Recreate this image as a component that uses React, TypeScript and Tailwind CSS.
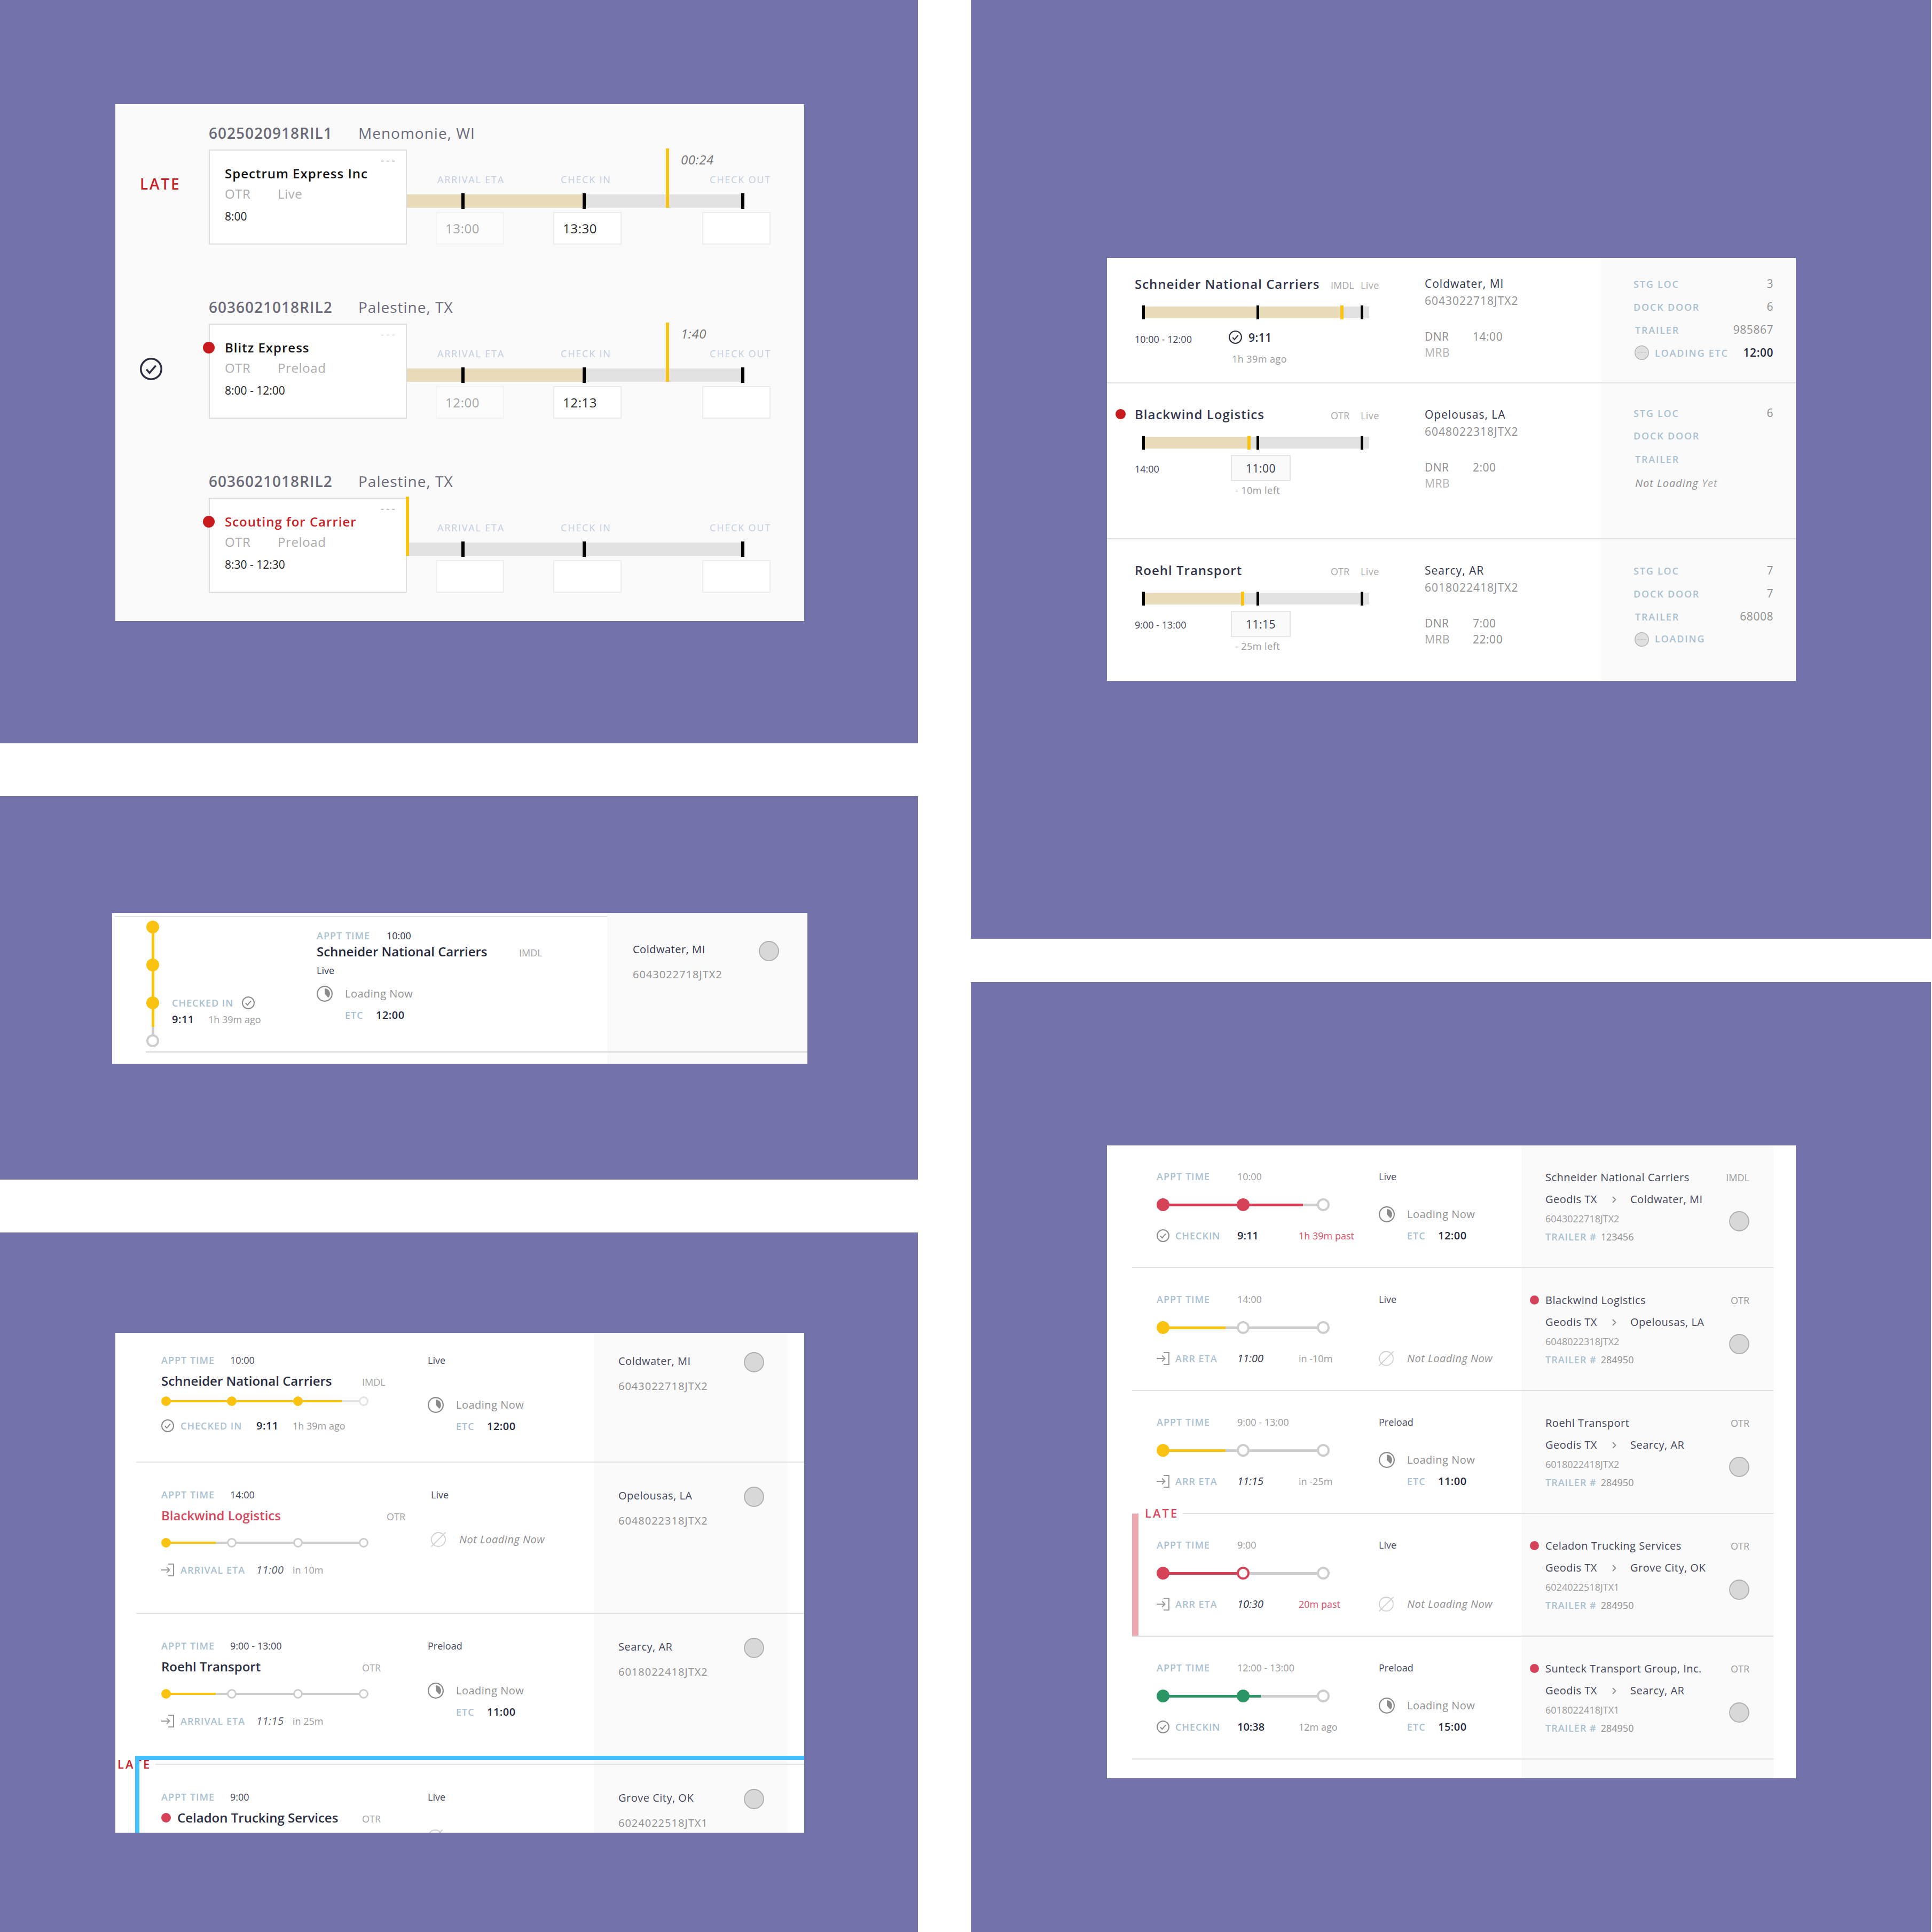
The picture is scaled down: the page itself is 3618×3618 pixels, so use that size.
import type { ReactNode } from "react";

/* ---------- icons ---------- */

function CheckCircle({ className }: { className: string }) {
  return (
    <svg viewBox="0 0 24 24" fill="none" stroke="currentColor" strokeWidth="2" className={className} aria-hidden="true">
      <circle cx="12" cy="12" r="11" />
      <path d="M7 12.4l3.3 3.8L17 8.4" />
    </svg>
  );
}

function ArriveIcon({ className }: { className: string }) {
  return (
    <svg viewBox="0 0 24 24" fill="none" stroke="currentColor" strokeWidth="2" className={className} aria-hidden="true">
      <path d="M13 1h10v22H13" />
      <path d="M0 12h16M10 6.5l5.5 5.5-5.5 5.5" />
    </svg>
  );
}

function LoadingIcon({ className }: { className: string }) {
  return (
    <svg viewBox="0 0 30 30" fill="none" className={className} aria-hidden="true">
      <circle cx="15" cy="15" r="13.9" stroke="currentColor" strokeWidth="2.2" />
      <path d="M15 15V5a10 10 0 0 1 6.8 17.2z" fill="currentColor" />
    </svg>
  );
}

function NotLoadingIcon({ className }: { className: string }) {
  return (
    <svg viewBox="0 0 28 28" fill="none" stroke="currentColor" strokeWidth="1.8" className={className} aria-hidden="true">
      <circle cx="14" cy="14" r="13" />
      <path d="M0.5 27.5l27-27" />
    </svg>
  );
}

function StatusDisc({ className, dashes = false }: { className: string; dashes?: boolean }) {
  return (
    <svg viewBox="0 0 38 38" fill="none" className={className} aria-hidden="true">
      <circle cx="19" cy="19" r="18" fill={dashes ? "#e0e0e0" : "#d8d8d8"} stroke="#aeaeae" strokeWidth="1.8" />
      {dashes && <path d="M8 19h5M16.500 19h5M25 19h5" stroke="#bcbcbc" strokeWidth="1.6" />}
    </svg>
  );
}

function Chevron({ className }: { className: string }) {
  return (
    <svg viewBox="0 0 8 13" fill="none" stroke="currentColor" strokeWidth="1.8" className={className} aria-hidden="true">
      <path d="M1 1l5.500 5.500L1 12" />
    </svg>
  );
}

/* ---------- shared pieces ---------- */

const tones = {
  yellow: { fill: "bg-[#fac312]", ring: "border-[#fac312]" },
  red: { fill: "bg-[#d64358]", ring: "border-[#d64358]" },
  green: { fill: "bg-[#2c9566]", ring: "border-[#2c9566]" },
};
type Tone = keyof typeof tones;
type Stop = "done" | "current" | "open";

function Label({ children, wide = false }: { children: ReactNode; wide?: boolean }) {
  return (
    <span className={`text-[18px] leading-6 font-semibold whitespace-nowrap text-[#a9c1d1] ${wide ? "tracking-widest" : "tracking-[1px]"}`}>
      {children}
    </span>
  );
}

function Progress({
  tone,
  stops,
  progress,
  large = false,
  faint = false,
}: {
  tone: Tone;
  stops: Stop[];
  progress: number;
  large?: boolean;
  faint?: boolean;
}) {
  const rest = faint ? "bg-[#e3e3e3]" : "bg-[#cdcdcd]";
  const openRing = faint ? "border-[#e3e3e3]" : "border-[#cdcdcd]";
  return (
    <div className="relative flex items-center justify-between">
      <div className={`absolute ${large ? "inset-x-[11px] h-[5px]" : "inset-x-[9px] h-[4px]"} ${rest}`}>
        <div className={`h-full ${tones[tone].fill}`} style={{ width: `${progress}%` }} />
      </div>
      {stops.map((stop, i) => (
        <span
          key={i}
          className={`relative rounded-full ${large ? "size-[24px] border-4" : "size-[18px] border-3"} ${
            stop === "done"
              ? `${tones[tone].fill} ${tones[tone].ring}`
              : stop === "current"
                ? `bg-white ${tones[tone].ring}`
                : `bg-white ${openRing}`
          }`}
        />
      ))}
    </div>
  );
}

function LoadingStatus({ loading, etc, className }: { loading: boolean; etc?: string; className: string }) {
  if (!loading) {
    return (
      <div className={`grid grid-cols-[53px_1fr] items-center ${className}`}>
        <NotLoadingIcon className="size-[28px] text-[#cfcfcf]" />
        <span className="text-[20px] leading-7 tracking-wide italic whitespace-nowrap text-[#8f8f8f]">Not Loading Now</span>
      </div>
    );
  }
  return (
    <div className={`grid grid-cols-[53px_58px_1fr] gap-y-3 items-baseline ${className}`}>
      <LoadingIcon className="size-[30px] -my-px self-center text-[#8a8a8a]" />
      <span className="col-span-2 text-[20px] leading-7 tracking-wide whitespace-nowrap text-[#8f8f8f]">Loading Now</span>
      <span className="col-start-2">
        <Label>ETC</Label>
      </span>
      <span className="text-[20px] leading-7 font-semibold tracking-wide text-[#26283d]">{etc}</span>
    </div>
  );
}

function Stage({ className, children }: { className: string; children: ReactNode }) {
  return <section className={`bg-[#7472ab] ${className}`}>{children}</section>;
}

/* ---------- appointment cards with time entry ---------- */

type Dock = {
  id: string;
  city: string;
  status: "late" | "ok" | "none";
  carrier: string;
  mode: string;
  load: string;
  window: string;
  alert?: boolean;
  scouting?: boolean;
  faintMenu?: boolean;
  fill: number;
  marker: number;
  elapsed?: string;
  eta: string;
  checkIn: string;
};

const docks: Dock[] = [
  { id: "6025020918RIL1", city: "Menomonie, WI", status: "late", carrier: "Spectrum Express Inc", mode: "OTR", load: "Live", window: "8:00", fill: 52.5, marker: 77, elapsed: "00:24", eta: "13:00", checkIn: "13:30" },
  { id: "6036021018RIL2", city: "Palestine, TX", status: "ok", carrier: "Blitz Express", mode: "OTR", load: "Preload", window: "8:00 - 12:00", alert: true, faintMenu: true, fill: 52.5, marker: 77, elapsed: "1:40", eta: "12:00", checkIn: "12:13" },
  { id: "6036021018RIL2", city: "Palestine, TX", status: "none", carrier: "Scouting for Carrier", mode: "OTR", load: "Preload", window: "8:30 - 12:30", alert: true, scouting: true, fill: 0, marker: 0, eta: "", checkIn: "" },
];

function TimeEntry({ id, value, muted }: { id: string; value: string; muted?: boolean }) {
  return (
    <input
      id={id}
      type="text"
      defaultValue={value}
      className={`h-[61px] w-[128px] border-2 pl-4 text-[24px] tracking-wide outline-none ${
        muted ? "border-[#f3f3f3] bg-[#fcfcfc] text-[#a5a5a5]" : "border-[#ededed] bg-white text-[#2a2a2a]"
      }`}
    />
  );
}

function DockRow({ dock, index }: { dock: Dock; index: number }) {
  const label = "text-[18px] leading-6 tracking-widest text-[#c3cedf] whitespace-nowrap";
  return (
    <li className="grid grid-cols-[175fr_371fr_744fr]">
      <div className="col-span-2 col-start-2 flex text-[28px] leading-10 tracking-[1px] text-[#6b6b79]">
        <span className="w-[280px] font-semibold">{dock.id}</span>
        <span>{dock.city}</span>
      </div>
      <div className="mt-[11px] pl-[46px]">
        {dock.status === "late" && (
          <p className="mt-[44px] text-[28px] leading-10 font-semibold tracking-widest text-[#cb2026]">LATE</p>
        )}
        {dock.status === "ok" && <CheckCircle className="mt-[64px] size-[42px] text-[#2b2d42]" />}
      </div>
      <article className="relative mt-[11px] border-2 border-[#dedede] bg-white pl-7 pt-[27px]">
        {dock.alert && <span className="absolute top-[32px] -left-[13px] size-[22px] rounded-full bg-[#c8191c]" />}
        <button
          type="button"
          aria-label="More actions"
          className={`absolute top-[4px] right-[16px] text-[20px] leading-7 tracking-[4px] ${dock.faintMenu ? "text-[#dcdcdc]" : "text-[#a0a0a0]"}`}
        >
          ---
        </button>
        <h3 className={`text-[24px] leading-8 font-semibold tracking-[1px] ${dock.scouting ? "text-[#cb2026]" : "text-[#111111]"}`}>{dock.carrier}</h3>
        <p className="mt-[6px] grid grid-cols-[99px_1fr] text-[24px] leading-8 tracking-wide text-[#adadad]">
          <span>{dock.mode}</span>
          <span>{dock.load}</span>
        </p>
        <p className="mt-[12px] text-[21px] leading-7 text-[#222222]">{dock.window}</p>
      </article>
      <div className="mt-[11px] pt-[44px]">
        <div className="grid grid-cols-[54px_220px_279px_1fr]">
          <label htmlFor={`eta-${index}`} className={`col-start-2 pl-[3px] ${label}`}>ARRIVAL ETA</label>
          <label htmlFor={`in-${index}`} className={`pl-[14px] ${label}`}>CHECK IN</label>
          <label htmlFor={`out-${index}`} className={`pl-[14px] ${label}`}>CHECK OUT</label>
        </div>
        <div className="relative mt-4 h-[25px] w-[85%] bg-[#e2e2e2]">
          <div className="h-full bg-[#e7dbba]" style={{ width: `${dock.fill}%` }} />
          {[16.6, 52.5, 99.5].map((at) => (
            <span key={at} className="absolute -top-[2px] -ml-[3px] h-[29px] w-[6px] bg-black" style={{ left: `${at}%` }} />
          ))}
          <div className="absolute bottom-0 -ml-[2px] flex h-[111px]" style={{ left: `${dock.marker}%` }}>
            <span className="w-[6px] bg-[#fac312]" />
            {dock.elapsed && (
              <span className="pt-[5px] pl-[22px] text-[24px] leading-8 tracking-wide text-[#757575] italic">{dock.elapsed}</span>
            )}
          </div>
        </div>
        <div className="mt-2 grid grid-cols-[54px_220px_279px_1fr]">
          <div className="col-start-2">
            <TimeEntry id={`eta-${index}`} value={dock.eta} muted={dock.eta !== ""} />
          </div>
          <TimeEntry id={`in-${index}`} value={dock.checkIn} />
          <TimeEntry id={`out-${index}`} value="" />
        </div>
      </div>
    </li>
  );
}

/* ---------- board with yard details ---------- */

type Board = {
  carrier: string;
  alert?: boolean;
  mode: string;
  window: string;
  marker: number;
  checkedIn?: string;
  eta?: string;
  relative: string;
  city: string;
  id: string;
  dnr: string;
  mrb: string;
  stg: string;
  door: string;
  trailer: string;
  loading: "etc" | "now" | "none";
  etc?: string;
  tight?: boolean;
  height: string;
  yard: string;
};

const boards: Board[] = [
  { carrier: "Schneider National Carriers", mode: "IMDL", window: "10:00 - 12:00", marker: 88, checkedIn: "9:11", relative: "1h 39m ago", city: "Coldwater, MI", id: "6043022718JTX2", dnr: "14:00", mrb: "", stg: "3", door: "6", trailer: "985867", loading: "etc", etc: "12:00", tight: true, height: "min-h-[235px] border-b-2", yard: "gap-[15px] pt-[34px]" },
  { carrier: "Blackwind Logistics", alert: true, mode: "OTR", window: "14:00", marker: 47, eta: "11:00", relative: "- 10m left", city: "Opelousas, LA", id: "6048022318JTX2", dnr: "2:00", mrb: "", stg: "6", door: "", trailer: "", loading: "none", height: "min-h-[292px] border-b-2", yard: "gap-[16px] pt-[41px]" },
  { carrier: "Roehl Transport", mode: "OTR", window: "9:00 - 13:00", marker: 44, eta: "11:15", relative: "- 25m left", city: "Searcy, AR", id: "6018022418JTX2", dnr: "7:00", mrb: "22:00", stg: "7", door: "7", trailer: "68008", loading: "now", height: "min-h-[265px]", yard: "gap-[15px] pt-[44px]" },
];

function BoardRow({ row, index }: { row: Board; index: number }) {
  const value = "text-[21px] leading-7 tracking-wide text-[#8f8f8f]";
  return (
    <li className={`grid grid-cols-[595fr_330fr_365fr] border-[#e0e0e0] ${row.height}`}>
      <div className={`pl-[52px] ${row.tight ? "pt-[33px]" : "pt-[42px]"}`}>
        <div className="relative grid grid-cols-[367px_56px_1fr] items-baseline">
          {row.alert && <span className="absolute top-[6px] -left-[36px] size-[19px] rounded-full bg-[#c8191c]" />}
          <h3 className="text-[24px] leading-8 font-semibold tracking-[1px] whitespace-nowrap text-[#33354a]">{row.carrier}</h3>
          <span className="text-[18px] text-[#a8a8a8]">{row.mode}</span>
          <span className="text-[18px] tracking-wide text-[#a8a8a8]">Live</span>
        </div>
        <div className="relative mt-[26px] ml-[15px] h-[22px] w-[424px] bg-[#e2e2e2]">
          <div className="h-full bg-[#e7dbba]" style={{ width: `${row.marker}%` }} />
          <span className="absolute -top-[2px] -ml-[3px] h-[26px] w-[6px] bg-[#fac312]" style={{ left: `${row.marker}%` }} />
          {[0.5, 51, 97].map((at) => (
            <span key={at} className="absolute -top-[2px] -ml-[3px] h-[26px] w-[5px] bg-black" style={{ left: `${at}%` }} />
          ))}
        </div>
        {row.checkedIn ? (
          <div className="mt-[18px] grid grid-cols-[176px_1fr] items-center">
            <span className="pt-[7px] text-[18px] leading-7 text-[#44465a]">{row.window}</span>
            <span className="flex items-center gap-3 text-[21px] leading-8 font-semibold tracking-wide text-[#2b2d42]">
              <CheckCircle className="size-[25px]" />
              {row.checkedIn}
            </span>
            <span className="col-start-2 mt-[11px] pl-1.5 text-[18px] leading-6 tracking-wide text-[#9a9a9a]">{row.relative}</span>
          </div>
        ) : (
          <div className="mt-3 grid grid-cols-[180px_1fr] items-baseline">
            <label htmlFor={`board-eta-${index}`} className="text-[18px] leading-6 text-[#44465a]">{row.window}</label>
            <input
              id={`board-eta-${index}`}
              type="text"
              defaultValue={row.eta}
              className="h-[49px] w-[112px] border-2 border-[#e6e6e6] bg-[#fafafa] text-center text-[21px] tracking-wide text-[#3a3c50] outline-none"
            />
            <span className="col-start-2 mt-[5px] pl-2 text-[18px] leading-6 tracking-wide text-[#9a9a9a]">{row.relative}</span>
          </div>
        )}
      </div>
      <div className={`text-[21px] leading-7 tracking-[1px] ${row.tight ? "pt-[34px]" : "pt-[44px]"}`}>
        <p className="text-[#33354a]">{row.city}</p>
        <p className="mt-[4px] text-[#8f8f8f]">{row.id}</p>
        <dl className="mt-[39px] grid grid-cols-[90px_1fr] gap-y-[2px] tracking-wide text-[#8f8f8f]">
          <dt>DNR</dt>
          <dd>{row.dnr}</dd>
          <dt className={row.mrb ? "text-[#a5a5a5]" : "text-[#b0b0b0]"}>MRB</dt>
          <dd>{row.mrb}</dd>
        </dl>
      </div>
      <dl className={`flex flex-col bg-[#fafafa] pr-[42px] pl-[61px] ${row.yard}`}>
        <div className="flex h-7 items-baseline justify-between">
          <dt className="leading-7"><Label wide>STG LOC</Label></dt>
          <dd className={value}>{row.stg}</dd>
        </div>
        <div className="flex h-7 items-baseline justify-between">
          <dt className="leading-7"><Label wide>DOCK DOOR</Label></dt>
          <dd className={value}>{row.door}</dd>
        </div>
        <div className="flex h-7 items-baseline justify-between pl-[3px]">
          <dt className="leading-7"><Label wide>TRAILER</Label></dt>
          <dd className={value}>{row.trailer}</dd>
        </div>
        {row.loading === "none" ? (
          <div className="pl-[3px] text-[20px] leading-7 tracking-[1px] text-[#8f8f8f] italic">
            Not Loading <span className="text-[#a8a8a8]">Yet</span>
          </div>
        ) : (
          <div className="flex h-7 items-baseline pl-[2px]">
            <StatusDisc dashes className="mr-[11px] size-[27px] self-center" />
            <dt className="leading-7"><Label wide>{row.loading === "etc" ? "LOADING ETC" : "LOADING"}</Label></dt>
            <dd className="ml-auto text-[21px] leading-7 font-semibold tracking-wide text-[#26283d]">{row.etc}</dd>
          </div>
        )}
      </dl>
    </li>
  );
}

/* ---------- appointment list ---------- */

type Appointment = {
  time: string;
  carrier: string;
  mode: string;
  modeColumn: string;
  load: string;
  inset: string;
  alertText?: boolean;
  tight?: boolean;
  stops: Stop[];
  progress: number;
  checkedIn: boolean;
  actual: string;
  relative: string;
  loading: boolean;
  etc?: string;
  city: string;
  id: string;
  height: string;
};

const appointments: Appointment[] = [
  { time: "10:00", carrier: "Schneider National Carriers", mode: "IMDL", modeColumn: "grid-cols-[376px_1fr]", load: "Live", inset: "", tight: true, stops: ["done", "done", "done", "open"], progress: 89, checkedIn: true, actual: "9:11", relative: "1h 39m ago", loading: true, etc: "12:00", city: "Coldwater, MI", id: "6043022718JTX2", height: "h-[243px]" },
  { time: "14:00", carrier: "Blackwind Logistics", mode: "OTR", modeColumn: "grid-cols-[422px_1fr]", load: "Live", inset: "pl-1.5", alertText: true, stops: ["done", "open", "open", "open"], progress: 25, checkedIn: false, actual: "11:00", relative: "in 10m", loading: false, city: "Opelousas, LA", id: "6048022318JTX2", height: "h-[283px]" },
  { time: "9:00 - 13:00", carrier: "Roehl Transport", mode: "OTR", modeColumn: "grid-cols-[376px_1fr]", load: "Preload", inset: "", stops: ["done", "open", "open", "open"], progress: 25, checkedIn: false, actual: "11:15", relative: "in 25m", loading: true, etc: "11:00", city: "Searcy, AR", id: "6018022418JTX2", height: "h-[283px]" },
];

function Destination({ city, id, tight = false }: { city: string; id: string; tight?: boolean }) {
  return (
    <div className={`flex justify-between bg-[#fafafa] pr-[44px] pl-[46px] ${tight ? "pt-[36px]" : "pt-[45px]"}`}>
      <div className="pt-[3px] text-[20px] leading-7">
        <p className="tracking-wide text-[#44465a]">{city}</p>
        <p className="mt-[19px] tracking-wider text-[#8f8f8f]">{id}</p>
      </div>
      <StatusDisc className="size-[38px]" />
    </div>
  );
}

function AppointmentRow({ row }: { row: Appointment }) {
  const top = row.tight ? "pt-[39px]" : "pt-[48px]";
  return (
    <li className={`grid grid-cols-[546fr_311fr_363fr_31fr] border-b-2 border-[#e2e2e2] ${row.height}`}>
      <div className={`pl-[47px] ${top}`}>
        <div className="grid grid-cols-[129px_1fr] items-baseline">
          <Label>APPT TIME</Label>
          <span className="text-[18px] leading-6 text-[#44465a]">{row.time}</span>
        </div>
        <div className={`mt-[11px] grid items-baseline ${row.modeColumn}`}>
          <h3 className={`text-[24px] leading-8 font-semibold whitespace-nowrap ${row.alertText ? "text-[#d9475c]" : "text-[#2b2d42]"}`}>{row.carrier}</h3>
          <span className="text-[18px] text-[#a3a3a3]">{row.mode}</span>
        </div>
        <div className={`w-[388px] ${row.tight ? "mt-[13px]" : "mt-[26px]"}`}>
          <Progress tone="yellow" stops={row.stops} progress={row.progress} faint={row.tight} />
        </div>
        <div className={`grid grid-cols-[36px_142px_68px_1fr] items-baseline ${row.tight ? "mt-[23px]" : "mt-[28px]"}`}>
          {row.checkedIn ? <CheckCircle className="size-[24px] self-center text-[#8a8a8a]" /> : <ArriveIcon className="size-[24px] self-center text-[#9a9a9a]" />}
          <Label>{row.checkedIn ? "CHECKED IN" : "ARRIVAL ETA"}</Label>
          <span className={`text-[20px] leading-7 tracking-wide ${row.checkedIn ? "font-semibold text-[#26283d]" : "text-[#5a5c6c] italic"}`}>{row.actual}</span>
          <span className="text-[18px] text-[#9a9a9a]">{row.relative}</span>
        </div>
      </div>
      <div className={`${top} ${row.inset}`}>
        <p className="text-[18px] leading-6 text-[#44465a]">{row.load}</p>
        <LoadingStatus loading={row.loading} etc={row.etc} className="mt-[58px]" />
      </div>
      <Destination city={row.city} id={row.id} tight={row.tight} />
    </li>
  );
}

function SelectedAppointment() {
  return (
    <li className="relative grid h-[127px] grid-cols-[546fr_311fr_363fr_31fr]">
      <div className="pt-12 pl-[47px]">
        <div className="grid grid-cols-[129px_1fr] items-baseline">
          <Label>APPT TIME</Label>
          <span className="text-[18px] leading-6 text-[#44465a]">9:00</span>
        </div>
        <div className="mt-[11px] grid grid-cols-[376px_1fr] items-baseline">
          <h3 className="flex items-center gap-3 text-[24px] leading-8 font-semibold whitespace-nowrap text-[#2b2d42]">
            <span className="size-[18px] rounded-full bg-[#d64358]" />
            Celadon Trucking Services
          </h3>
          <span className="text-[18px] text-[#a3a3a3]">OTR</span>
        </div>
      </div>
      <div className="pt-12">
        <p className="text-[18px] leading-6 text-[#44465a]">Live</p>
        <NotLoadingIcon className="mt-[49px] size-[28px] text-[#cfcfcf]" />
      </div>
      <Destination city="Grove City, OK" id="6024022518JTX1" />
      <span className="absolute -top-[17px] -left-[35px] bg-white pr-2 text-[22px] leading-[30px] font-semibold tracking-[3px] text-[#cb2026]">LATE</span>
      <div className="absolute -top-[17px] right-0 bottom-0 -left-[2px] border-t-8 border-l-8 border-[#43bfff]" />
    </li>
  );
}

/* ---------- appointment list, route details ---------- */

type Route = {
  time: string;
  tone: Tone;
  stops: Stop[];
  progress: number;
  checkedIn: boolean;
  actual: string;
  relative: string;
  past?: boolean;
  load: string;
  loading: boolean;
  etc?: string;
  carrier: string;
  alert?: boolean;
  late?: boolean;
  mode: string;
  city: string;
  id: string;
  trailer: string;
};

const routes: Route[] = [
  { time: "10:00", tone: "red", stops: ["done", "done", "open"], progress: 87, checkedIn: true, actual: "9:11", relative: "1h 39m past", past: true, load: "Live", loading: true, etc: "12:00", carrier: "Schneider National Carriers", mode: "IMDL", city: "Coldwater, MI", id: "6043022718JTX2", trailer: "123456" },
  { time: "14:00", tone: "yellow", stops: ["done", "open", "open"], progress: 39, checkedIn: false, actual: "11:00", relative: "in -10m", load: "Live", loading: false, carrier: "Blackwind Logistics", alert: true, mode: "OTR", city: "Opelousas, LA", id: "6048022318JTX2", trailer: "284950" },
  { time: "9:00 - 13:00", tone: "yellow", stops: ["done", "open", "open"], progress: 39, checkedIn: false, actual: "11:15", relative: "in -25m", load: "Preload", loading: true, etc: "11:00", carrier: "Roehl Transport", mode: "OTR", city: "Searcy, AR", id: "6018022418JTX2", trailer: "284950" },
  { time: "9:00", tone: "red", stops: ["done", "current", "open"], progress: 50, checkedIn: false, actual: "10:30", relative: "20m past", past: true, load: "Live", loading: false, carrier: "Celadon Trucking Services", alert: true, late: true, mode: "OTR", city: "Grove City, OK", id: "6024022518JTX1", trailer: "284950" },
  { time: "12:00 - 13:00", tone: "green", stops: ["done", "done", "open"], progress: 61, checkedIn: true, actual: "10:38", relative: "12m ago", load: "Preload", loading: true, etc: "15:00", carrier: "Sunteck Transport Group, Inc.", alert: true, mode: "OTR", city: "Searcy, AR", id: "6018022418JTX1", trailer: "284950" },
];

function RouteRow({ row }: { row: Route }) {
  return (
    <li className="relative grid min-h-[230px] grid-cols-[461fr_268fr_472fr] border-b-2 border-[#e0e0e0]">
      {row.late && (
        <>
          <div className="absolute inset-y-0 left-0 w-3 bg-[#eba9af]" />
          <span className="absolute -top-[17px] left-[13px] bg-white pr-2 pl-[11px] text-[22px] leading-[30px] font-semibold tracking-[3px] text-[#d9485c]">LATE</span>
        </>
      )}
      <div className="pt-[46px] pl-[46px]">
        <div className="grid grid-cols-[151px_1fr] items-baseline">
          <Label>APPT TIME</Label>
          <span className="text-[18px] leading-6 text-[#9a9a9a]">{row.time}</span>
        </div>
        <div className="mt-[29px] w-[324px]">
          <Progress large tone={row.tone} stops={row.stops} progress={row.progress} />
        </div>
        <div className="mt-8 grid grid-cols-[35px_116px_115px_1fr] items-baseline">
          {row.checkedIn ? <CheckCircle className="size-[24px] self-center text-[#8a8a8a]" /> : <ArriveIcon className="size-[24px] self-center text-[#9a9a9a]" />}
          <Label>{row.checkedIn ? "CHECKIN" : "ARR ETA"}</Label>
          <span className={`text-[20px] leading-7 ${row.checkedIn ? "font-semibold text-[#26283d]" : "font-medium text-[#33354a] italic"}`}>{row.actual}</span>
          <span className={`text-[18px] whitespace-nowrap ${row.past ? "text-[#dc5065]" : "text-[#9a9a9a]"}`}>{row.relative}</span>
        </div>
      </div>
      <div className="pt-[46px] pl-px">
        <p className="text-[18px] leading-6 text-[#44465a]">{row.load}</p>
        <LoadingStatus loading={row.loading} etc={row.etc} className={row.loading ? "mt-[45px]" : "mt-[85px]"} />
      </div>
      <div className="flex justify-between bg-[#fafafa] pt-[46px] pr-[45px] pl-[45px]">
        <div>
          <h3 className="relative text-[20px] leading-7 tracking-wide whitespace-nowrap text-[#44465a]">
            {row.alert && <span className="absolute top-[5px] -left-[29px] size-[17px] rounded-full bg-[#d64358]" />}
            {row.carrier}
          </h3>
          <p className="mt-[13px] grid grid-cols-[125px_34px_1fr] items-center text-[20px] leading-7 tracking-wide whitespace-nowrap text-[#44465a]">
            <span>Geodis TX</span>
            <Chevron className="h-[13px] w-[8px] text-[#8a8a8a]" />
            <span>{row.city}</span>
          </p>
          <p className="mt-[10px] text-[18px] leading-6 text-[#9a9a9a]">{row.id}</p>
          <p className="mt-[10px] flex items-baseline gap-2 text-[18px] leading-6 text-[#8f8f8f]">
            <Label>TRAILER #</Label>
            {row.trailer}
          </p>
        </div>
        <div className="flex flex-col items-end">
          <span className="text-[18px] leading-7 text-[#9a9a9a]">{row.mode}</span>
          <StatusDisc className="mt-[49px] size-[38px]" />
        </div>
      </div>
    </li>
  );
}

/* ---------- single appointment with vertical timeline ---------- */

function AppointmentDetail() {
  return (
    <article className="border-l-5 border-[#f8f6fa] bg-white">
      <div className="grid grid-cols-[378fr_544fr_375fr]">
        <div className="mt-[5px] flex border-t-2 border-[#e0e0e0] pt-[7px] pb-2 pl-[59px]">
          <div className="relative flex h-[237px] flex-col items-center justify-between">
            <div className="absolute inset-y-3 w-[5px] bg-[#cdcdcd]">
              <div className="w-full bg-[#fac312]" style={{ height: "88%" }} />
            </div>
            <span className="relative size-[24px] rounded-full bg-[#fac312]" />
            <span className="relative size-[24px] rounded-full bg-[#fac312]" />
            <span className="relative size-[24px] rounded-full bg-[#fac312]" />
            <span className="relative size-[24px] rounded-full border-4 border-[#cdcdcd] bg-white" />
          </div>
          <div className="mt-[142px] ml-6">
            <p className="flex items-center gap-4">
              <Label>CHECKED IN</Label>
              <CheckCircle className="size-[24px] text-[#8a8a8a]" />
            </p>
            <p className="mt-[5px] grid grid-cols-[68px_1fr] items-baseline">
              <span className="text-[20px] leading-7 font-semibold tracking-wide text-[#26283d]">9:11</span>
              <span className="text-[18px] whitespace-nowrap text-[#9a9a9a]">1h 39m ago</span>
            </p>
          </div>
        </div>
        <div className="mt-[5px] border-t-2 border-[#e0e0e0] pt-[23px]">
          <p className="grid grid-cols-[131px_1fr] items-baseline">
            <Label>APPT TIME</Label>
            <span className="text-[18px] leading-6 text-[#33354a]">10:00</span>
          </p>
          <div className="mt-[2px] grid grid-cols-[379px_1fr] items-baseline">
            <h3 className="text-[24px] leading-8 font-semibold whitespace-nowrap text-[#26283d]">Schneider National Carriers</h3>
            <span className="text-[18px] text-[#a3a3a3]">IMDL</span>
          </div>
          <p className="mt-[7px] text-[18px] leading-6 text-[#33354a]">Live</p>
          <LoadingStatus loading etc="12:00" className="mt-[18px]" />
        </div>
        <div className="flex justify-between bg-[#fafafa] pt-[52px] pr-[53px] pl-12">
          <div className="pt-[2px] text-[20px] leading-7">
            <p className="tracking-wide text-[#33354a]">Coldwater, MI</p>
            <p className="mt-[19px] tracking-wider text-[#8f8f8f]">6043022718JTX2</p>
          </div>
          <StatusDisc className="size-[38px]" />
        </div>
      </div>
      <div className="grid grid-cols-[922fr_375fr]">
        <div className="ml-[58px] h-[23px] border-t-2 border-[#d6d6d6]" />
        <div className="border-t-2 border-[#d6d6d6] bg-[#fafafa]" />
      </div>
    </article>
  );
}

/* ---------- page ---------- */

export default function App() {
  return (
    <main className="grid grid-cols-[1719fr_1798fr] gap-x-[99px] bg-white pr-[2px] font-['Open_Sans','Noto_Sans',sans-serif]">
      <div className="flex flex-col gap-[99px]">
        <Stage className="pt-[195px] pr-[213px] pb-[229px] pl-[216px]">
          <ul className="flex flex-col gap-[97px] bg-[#fafafa] pt-[34px] pb-[53px]">
            {docks.map((dock, i) => (
              <DockRow key={i} dock={dock} index={i} />
            ))}
          </ul>
        </Stage>
        <Stage className="pt-[219px] pr-[207px] pb-[217px] pl-[210px]">
          <AppointmentDetail />
        </Stage>
        <Stage className="pt-[188px] pr-[213px] pb-[186px] pl-[216px]">
          <ul className="overflow-hidden bg-white pl-[39px]">
            {appointments.map((row) => (
              <AppointmentRow key={row.id} row={row} />
            ))}
            <SelectedAppointment />
          </ul>
        </Stage>
      </div>
      <div className="flex flex-col gap-[81px]">
        <Stage className="pt-[483px] pr-[253px] pb-[483px] pl-[255px]">
          <ul className="bg-white">
            {boards.map((row, i) => (
              <BoardRow key={row.id} row={row} index={i} />
            ))}
          </ul>
        </Stage>
        <Stage className="pt-[306px] pr-[253px] pb-[288px] pl-[255px]">
          <div className="bg-white pr-[42px] pl-[47px]">
            <ul>
              {routes.map((row) => (
                <RouteRow key={row.id} row={row} />
              ))}
            </ul>
            <div className="grid grid-cols-[729fr_472fr]">
              <div className="col-start-2 h-[35px] bg-[#fafafa]" />
            </div>
          </div>
        </Stage>
      </div>
    </main>
  );
}
